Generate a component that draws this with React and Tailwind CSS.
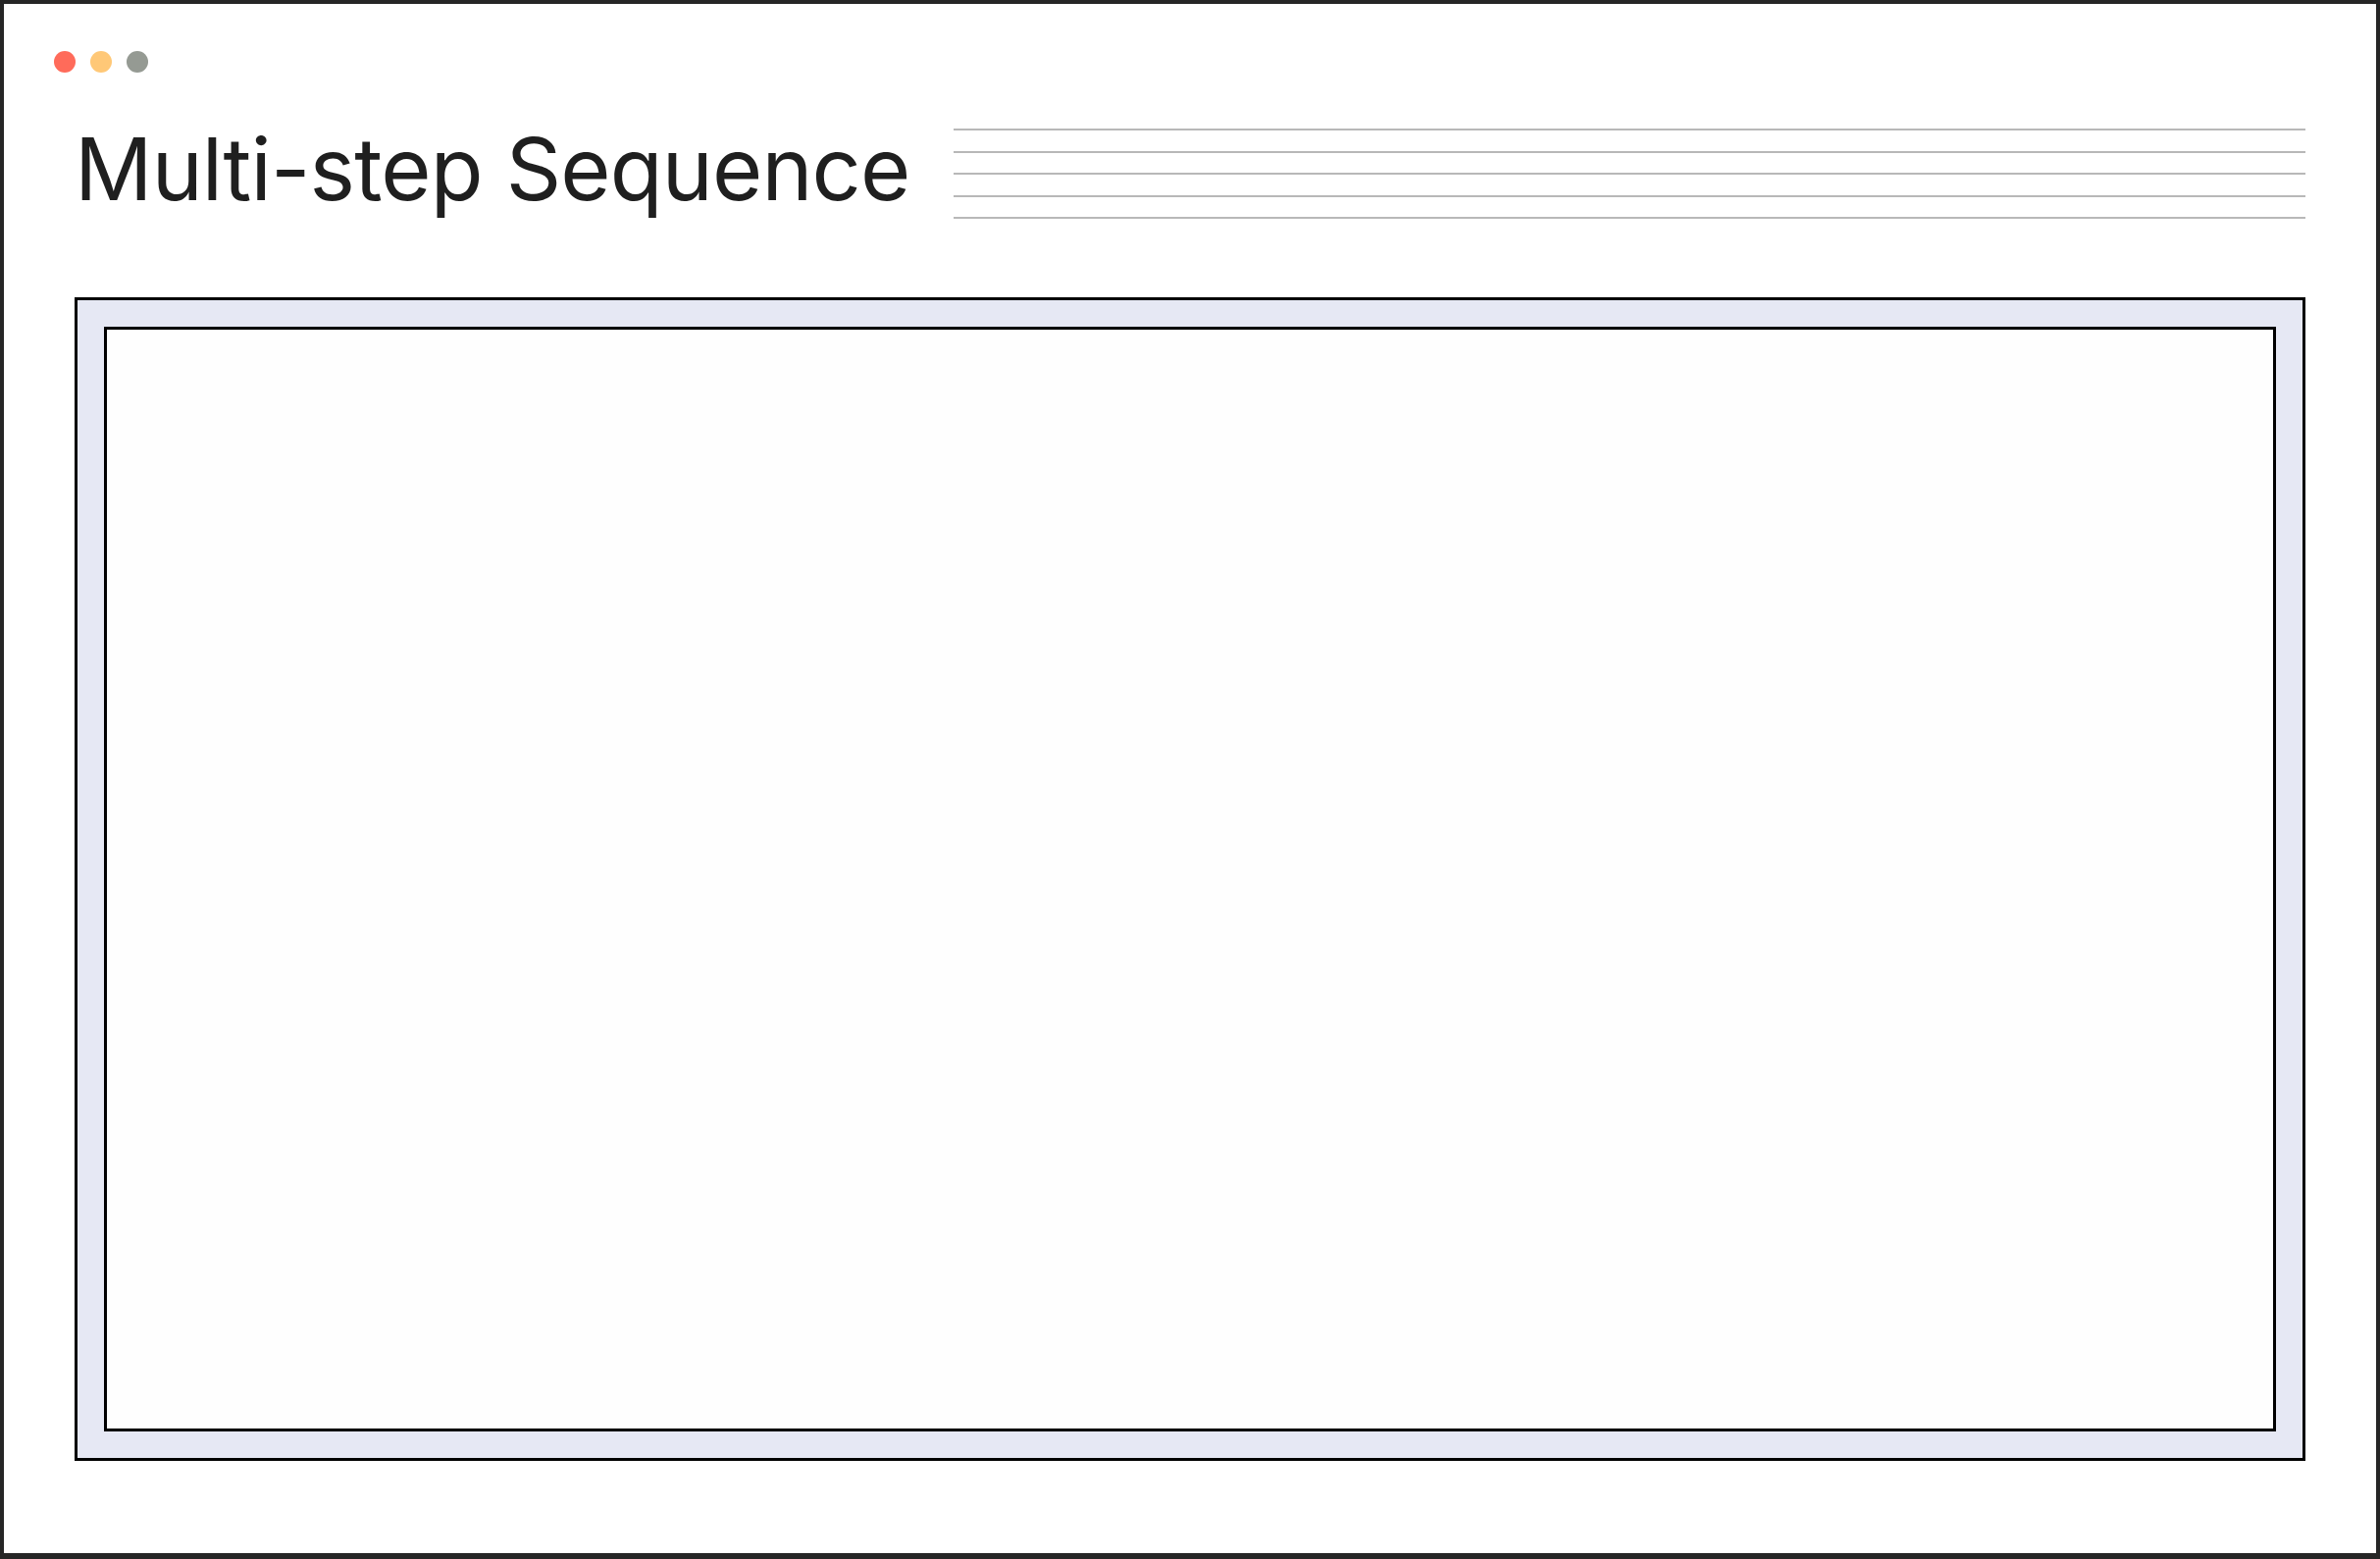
const Dots = () => (
    <div className="flex items-center gap-[15px] pl-[51px] pt-[48px]">
        <span className="block w-[22px] h-[22px] rounded-full bg-[#ff6b5a]" />
        <span className="block w-[22px] h-[22px] rounded-full bg-[#ffc877]" />
        <span className="block w-[22px] h-[22px] rounded-full bg-[#959a93]" />
    </div>
);

const RuleLines = () => (
    <div className="mt-[3px] flex w-[1378px] flex-col gap-[20.5px]">
        {[0, 1, 2, 3, 4].map((i) => (
            <div key={i} className="h-[2px] w-full bg-[#b8b8b8]" />
        ))}
    </div>
);

export default function App() {
    return (
        <div className="w-[2426px] h-[1589px] bg-white border-[4px] border-b-[6px] border-[#262626] overflow-hidden">
            {/* window controls */}
            <Dots />

            {/* heading + ruled lines */}
            <div className="mt-[54px] flex items-start justify-between px-[72px]">
                <h1 className="font-['Inter',sans-serif] text-[88px] leading-none font-normal text-[#1f1f1f] tracking-[-0.85px] whitespace-nowrap">
                    Multi-step Sequence
                </h1>
                <RuleLines />
            </div>

            {/* canvas frame */}
            <div className="mx-[72px] mt-[80px] h-[1186px] border-[3px] border-black bg-[#e6e8f4] p-[27px]">
                <div className="h-full w-full border-[3px] border-black bg-[#fefefe]" />
            </div>
        </div>
    );
}
